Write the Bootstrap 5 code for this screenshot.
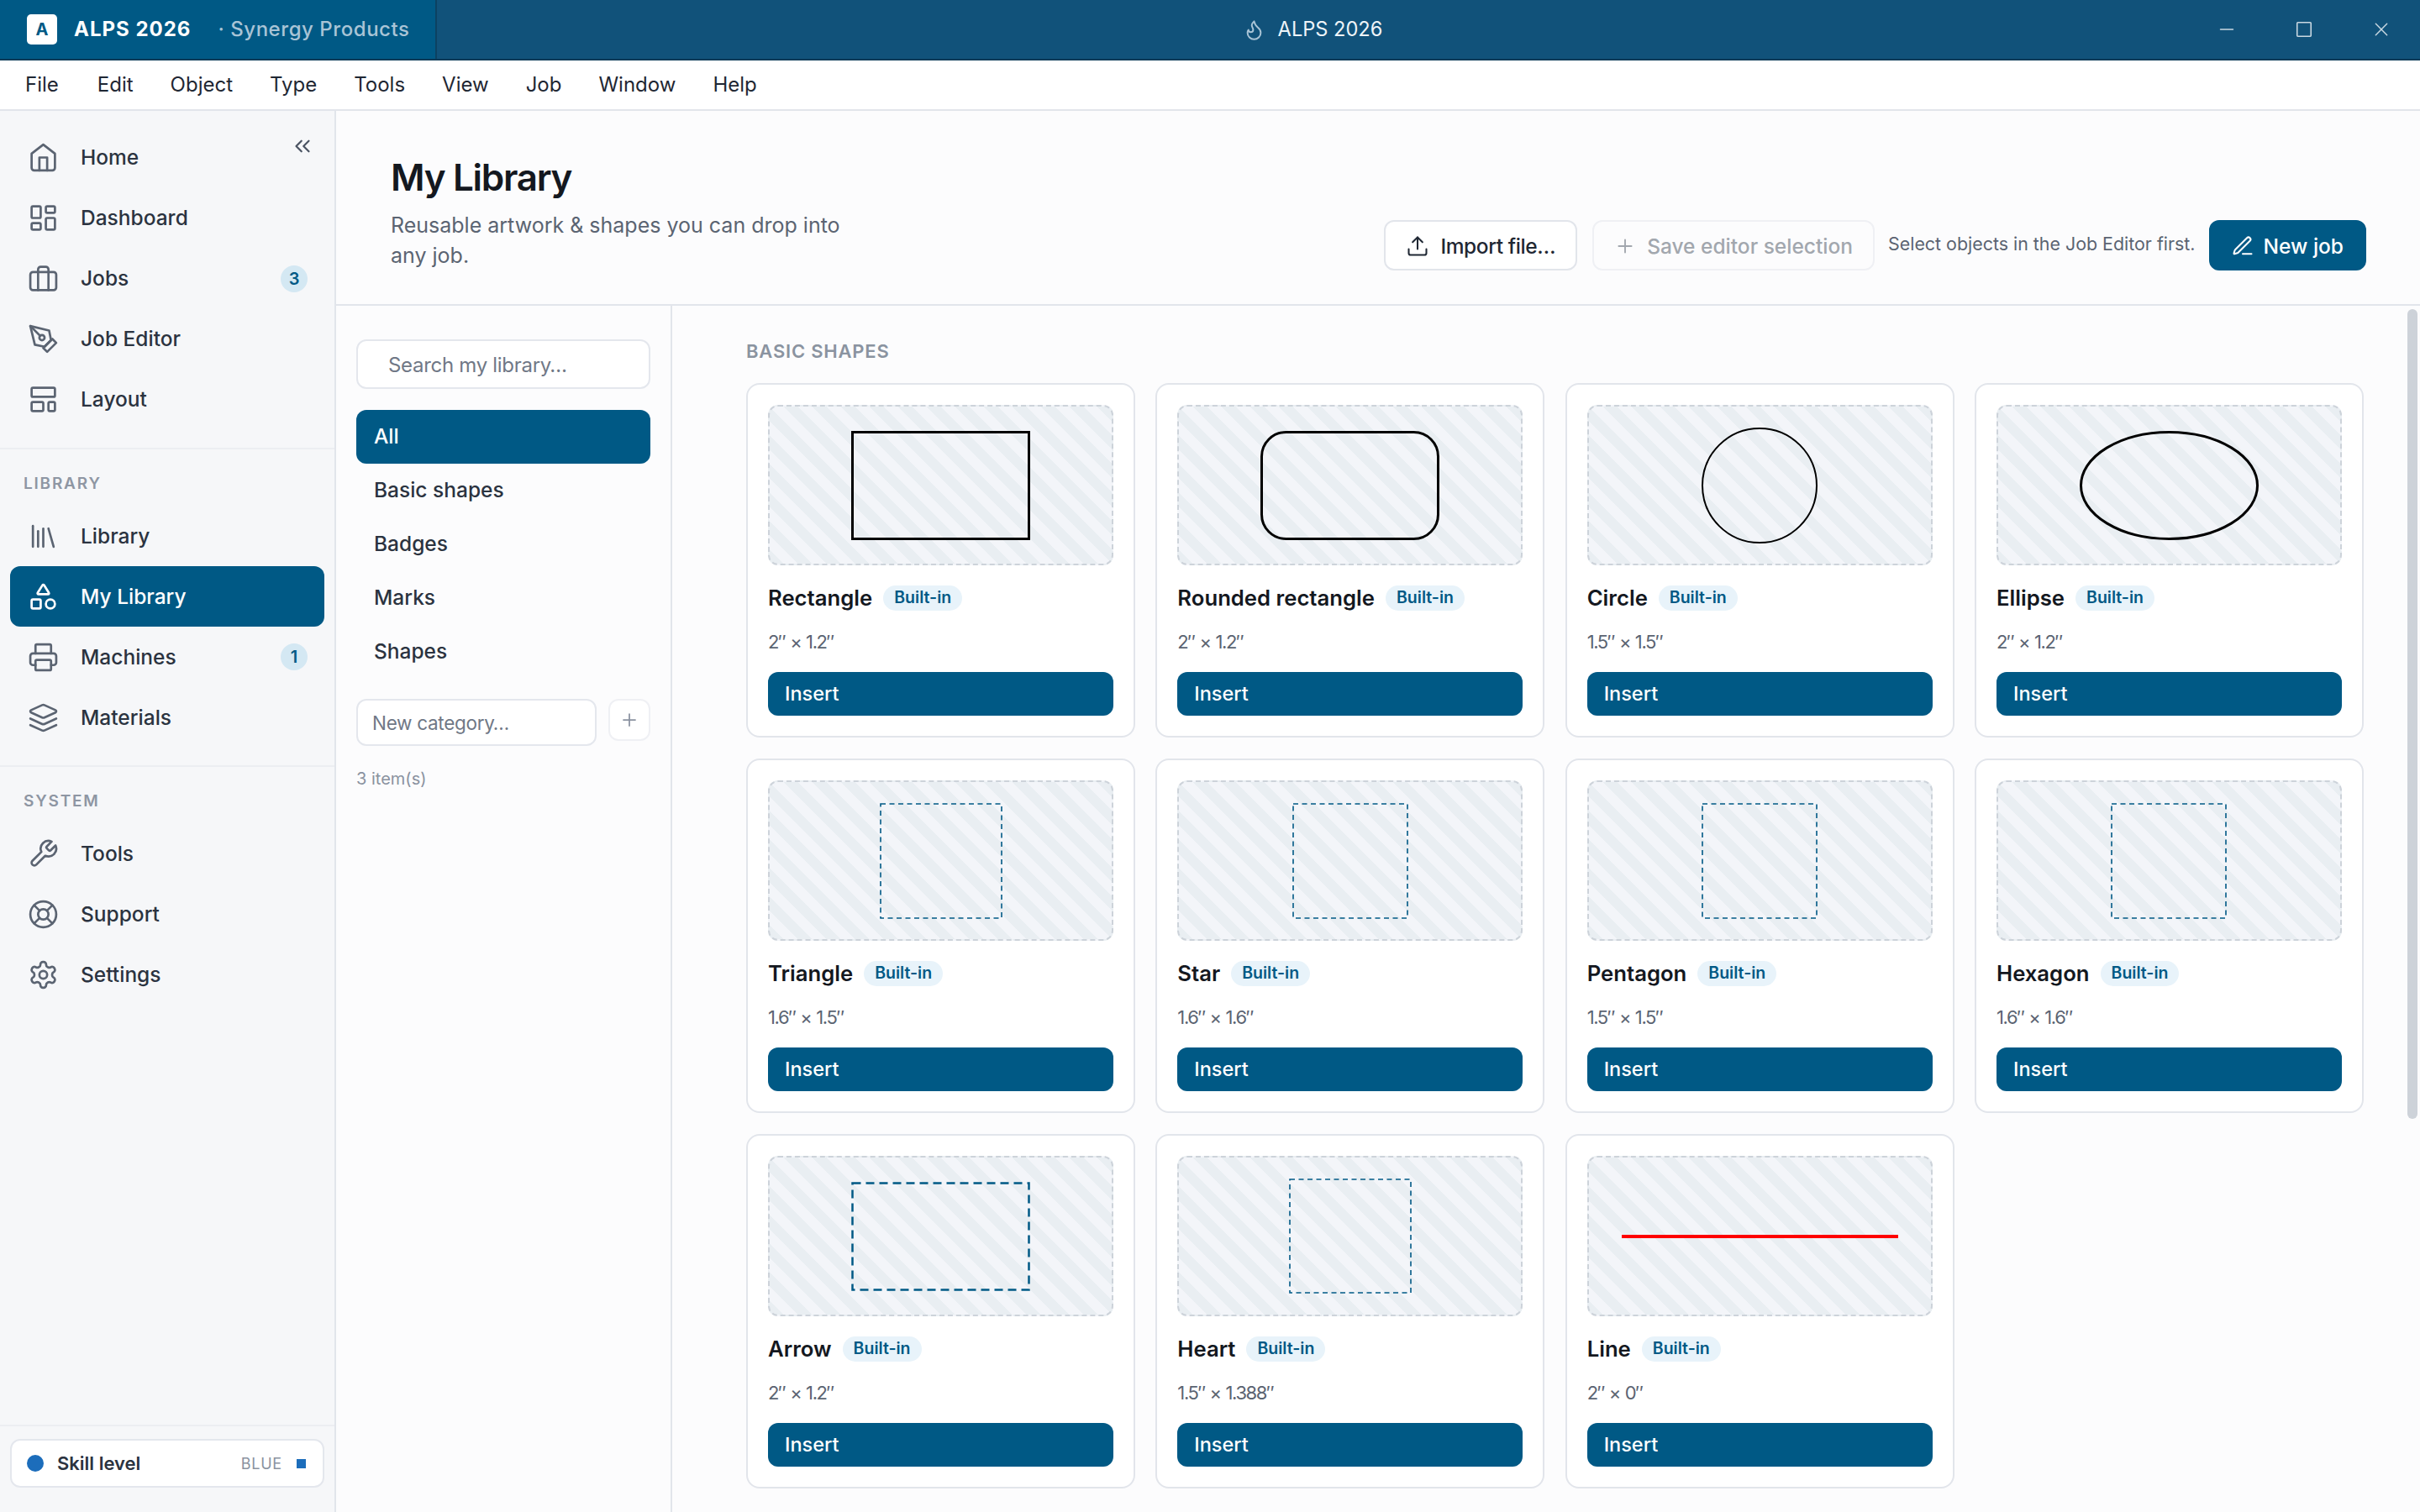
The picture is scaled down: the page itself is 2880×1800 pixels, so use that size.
<!DOCTYPE html>
<html lang="en">
<head>
  <meta charset="UTF-8">
  <title>ALPS 2026 - My Library</title>
  <link href="https://cdn.jsdelivr.net/npm/bootstrap@5.3.2/dist/css/bootstrap.min.css" rel="stylesheet">
  <style>
    html, body { height: 100%; }
    body { font-family: Inter, "Liberation Sans", sans-serif; font-size: 25px; color: #1f2733; background: #fcfcfd; overflow: hidden; }
    svg.ico { fill: none; stroke: currentColor; stroke-width: 1.75; stroke-linecap: round; stroke-linejoin: round; flex: none; }

    /* title bar */
    .title-strip { height: 72px; background: #11527a; border-bottom: 2px solid #0a3a57; color: #fff; flex: none; }
    .title-brand { width: 520px; height: 70px; background: #005985; border-right: 2px solid #0c4262; padding-left: 32px; }
    .logo-box { width: 36px; height: 36px; background: #fff; color: #005985; border-radius: 5px; font-size: 20px; font-weight: 700; }
    .brand-name { font-size: 24px; font-weight: 700; margin-left: 20px; letter-spacing: 1px; }
    .brand-sub { font-size: 24px; font-weight: 500; margin-left: 32px; color: #a9c4d6; letter-spacing: .55px; }
    .title-mid { font-size: 23.6px; color: #eef4f8; gap: 15px; }
    .title-mid svg { color: #a9c4d6; }
    .win-ctl { width: 92px; height: 70px; color: #c9d8e2; }

    /* menu bar */
    .menu-strip { height: 60px; background: #fff; border-bottom: 2px solid #e2e5eb; padding-left: 8px; flex: none; font-size: 24px; }
    .menu-strip span { padding: 0 22px; }
    .menu-strip span:first-child { padding-right: 24px; }

    /* sidebar */
    .side-col { width: 400px; background: #f6f7f9; border-right: 2px solid #e2e5eb; flex: none; }
    .side-group { padding: 19.5px 12px 21px; border-bottom: 2px solid #eceef2; }
    .side-group.no-rule { border-bottom: 0; }
    .side-head { font-size: 19px; font-weight: 600; letter-spacing: 1.8px; color: #8e96a3; line-height: 30px; padding: 26.5px 0 11px 16px; }
    .side-head.head-low { padding-top: 26px; }
    .side-link { height: 72px; padding: 0 20px 0 21px; gap: 26px; color: #2b3340; font-weight: 500; font-size: 24.5px; border-radius: 12px; text-decoration: none; }
    .side-link svg { color: #5b6472; }
    .side-link.active-link { background: #005985; color: #fff; }
    .side-link.active-link svg { color: #fff; }
    .count-dot { width: 32px; height: 32px; border-radius: 50%; background: #d4e8f3; color: #005985; font-size: 20px; font-weight: 600; margin-left: auto; }
    .collapse-btn { top: 27px; right: 23px; color: #4a5362; }
    .skill-wrap { border-top: 2px solid #eceef2; padding: 15px 12px 29px; }
    .skill-box { height: 58px; background: #fff; border: 2px solid #e4e7ed; border-radius: 12px; padding: 0 20px 0 18px; }
    .skill-dot { width: 20px; height: 20px; border-radius: 50%; background: #1c6dbb; }
    .skill-name { font-size: 22px; font-weight: 600; margin-left: 16px; color: #2b3340; }
    .skill-tag { font-size: 18px; letter-spacing: .8px; color: #8a92a0; margin-left: auto; }
    .skill-sq { width: 11px; height: 11px; background: #1c6dbb; margin-left: 17px; }

    /* page header */
    .page-head { height: 232px; border-bottom: 2px solid #e2e5eb; padding: 52px 64px 40px 65px; flex: none; }
    .page-title { font-size: 44px; font-weight: 600; line-height: 54px; margin: 0; color: #14181f; letter-spacing: -1.3px; }
    .page-sub { font-size: 25px; line-height: 36px; color: #5b6472; width: 560px; margin: 12px 0 0; }
    .btn.act-btn { height: 60px; font-size: 24.5px; font-weight: 500; border-radius: 12px; border: 2px solid #e2e5eb; background: #fff; color: #1f2733; padding: 2px 25px 0; gap: 13px; }
    .btn.act-btn.is-off { opacity: 1; color: #a2a7ae; background: #fcfcfd; border-color: #eff0f4; gap: 13px; padding: 2px 24px 0; }
    .btn.act-btn.is-main { background: #005985; border-color: #005985; color: #fff; gap: 11px; padding: 2px 25px 0 24px; }
    .btn.act-btn.is-tight { letter-spacing: -.4px; padding: 2px 24px 0; }
    .hint-txt { font-size: 21.4px; color: #5b6472; margin: 0 16px 4px; }

    /* category panel */
    .cat-col { width: 400px; border-right: 2px solid #e2e5eb; padding: 40px 24px 0 24px; flex: none; }
    .form-control.lib-input { border: 2px solid #e4e7ed; border-radius: 12px; font-size: 24px; letter-spacing: -.3px; color: #2b3340; box-shadow: none; background: #fff; }
    .form-control.lib-input::placeholder { color: #707886; }
    .form-control.lib-input.input-big { height: 59px; padding: 8px 0 6px 36px; }
    .form-control.lib-input.input-sm { font-size: 22.5px; height: 56px; padding-left: 17px; }
    .cat-item { height: 64px; padding: 0 21px 2px; font-size: 24.5px; font-weight: 500; color: #2b3340; border-radius: 12px; }
    .cat-item.cat-on { background: #005985; color: #fff; }
    .add-btn { width: 50px; height: 50px; border: 2px solid #eff0f4; border-radius: 12px; color: #8a92a0; flex: none; background: #fff; }
    .cat-count { font-size: 20px; color: #8a92a0; margin-top: 24px; }

    /* shape grid */
    .grid-col { padding: 40px 68px 0 88px; }
    .grid-head { font-size: 22px; font-weight: 600; letter-spacing: .8px; color: #8a93a0; line-height: 28px; margin-bottom: 24px; }
    .tile-grid { grid-template-columns: repeat(4, 463px); column-gap: 24.33px; row-gap: 25px; }
    .card.shape-tile { border: 2px solid #e2e5eb; border-radius: 16px; background: #fff; height: 422px; }
    .shape-tile .card-body { padding: 24px; }
    .shape-view { height: 191px; border: 2px dashed #cdd3da; border-radius: 12px; background: repeating-linear-gradient(45deg, #e9eef2 0 12px, #f3f5f9 12px 24px); }
    .name-row { height: 36px; margin-top: 21px; gap: 13px; }
    .shape-name { font-size: 25.7px; font-weight: 600; color: #14181f; }
    .tag-pill { height: 30px; padding: 0 13px; border-radius: 15px; background: #e8f3fa; color: #005985; font-size: 19.5px; font-weight: 600; }
    .shape-size { font-size: 22px; line-height: 32px; color: #5b6472; margin: 18px 0 20px; letter-spacing: -1.4px; word-spacing: 1px; }
    .btn.insert-btn { height: 52px; width: 100%; background: #005985; border: 0; border-radius: 12px; color: #fff; font-size: 23.5px; font-weight: 500; text-align: left; padding: 0 20px; }
    .scroll-thumb { top: 4px; right: 3px; width: 12px; height: 964px; background: #cdd2d9; border-radius: 6px; }
  </style>
</head>
<body class="d-flex flex-column">

  <svg width="0" height="0" class="position-absolute">
    <symbol id="i-home" viewBox="0 0 24 24"><path d="m3 9 9-7 9 7v11a2 2 0 0 1-2 2H5a2 2 0 0 1-2-2z"/><path d="M9 22V12h6v10"/></symbol>
    <symbol id="i-dash" viewBox="0 0 24 24"><rect x="3" y="3" width="7" height="9" rx="1"/><rect x="14" y="3" width="7" height="5" rx="1"/><rect x="14" y="12" width="7" height="9" rx="1"/><rect x="3" y="16" width="7" height="5" rx="1"/></symbol>
    <symbol id="i-jobs" viewBox="0 0 24 24"><rect x="2" y="7" width="20" height="14" rx="2"/><path d="M16 21V5a2 2 0 0 0-2-2h-4a2 2 0 0 0-2 2v16"/></symbol>
    <symbol id="i-pen" viewBox="0 0 24 24"><path d="m12 19 7-7 3 3-7 7-3-3z"/><path d="m18 13-1.5-7.5L2 2l3.5 14.5L13 18l5-5z"/><path d="m2 2 7.586 7.586"/><circle cx="11" cy="11" r="2"/></symbol>
    <symbol id="i-layout" viewBox="0 0 24 24"><rect x="3" y="3" width="18" height="7" rx="1"/><rect x="3" y="14" width="9" height="7" rx="1"/><rect x="16" y="14" width="5" height="7" rx="1"/></symbol>
    <symbol id="i-library" viewBox="0 0 24 24"><path d="m16 6 4 14"/><path d="M12 6v14"/><path d="M8 8v12"/><path d="M4 4v16"/></symbol>
    <symbol id="i-shapes" viewBox="0 0 24 24"><path d="M8.3 10a.7.7 0 0 1-.626-1.079L11.4 3a.7.7 0 0 1 1.198-.043L16.3 8.9a.7.7 0 0 1-.572 1.1Z"/><rect x="3" y="14" width="7" height="7" rx="1"/><circle cx="17.5" cy="17.5" r="3.5"/></symbol>
    <symbol id="i-print" viewBox="0 0 24 24"><path d="M6 18H4a2 2 0 0 1-2-2v-5a2 2 0 0 1 2-2h16a2 2 0 0 1 2 2v5a2 2 0 0 1-2 2h-2"/><path d="M6 9V3a1 1 0 0 1 1-1h10a1 1 0 0 1 1 1v6"/><rect x="6" y="14" width="12" height="8" rx="1"/></symbol>
    <symbol id="i-layers" viewBox="0 0 24 24"><path d="m12.83 2.18a2 2 0 0 0-1.66 0L2.6 6.08a1 1 0 0 0 0 1.83l8.58 3.91a2 2 0 0 0 1.66 0l8.58-3.9a1 1 0 0 0 0-1.83Z"/><path d="m22 17.65-9.17 4.16a2 2 0 0 1-1.66 0L2 17.65"/><path d="m22 12.65-9.17 4.16a2 2 0 0 1-1.66 0L2 12.65"/></symbol>
    <symbol id="i-wrench" viewBox="0 0 24 24"><path d="M14.7 6.3a1 1 0 0 0 0 1.4l1.6 1.6a1 1 0 0 0 1.4 0l3.77-3.77a6 6 0 0 1-7.94 7.94l-6.91 6.91a2.12 2.12 0 0 1-3-3l6.91-6.91a6 6 0 0 1 7.94-7.94l-3.76 3.76z"/></symbol>
    <symbol id="i-buoy" viewBox="0 0 24 24"><circle cx="12" cy="12" r="10"/><path d="m4.93 4.93 4.24 4.24"/><path d="m14.83 9.17 4.24-4.24"/><path d="m14.83 14.83 4.24 4.24"/><path d="m9.17 14.83-4.24 4.24"/><circle cx="12" cy="12" r="4"/></symbol>
    <symbol id="i-gear" viewBox="0 0 24 24"><path d="M12.22 2h-.44a2 2 0 0 0-2 2v.18a2 2 0 0 1-1 1.73l-.43.25a2 2 0 0 1-2 0l-.15-.08a2 2 0 0 0-2.73.73l-.22.38a2 2 0 0 0 .73 2.73l.15.1a2 2 0 0 1 1 1.72v.51a2 2 0 0 1-1 1.74l-.15.09a2 2 0 0 0-.73 2.73l.22.38a2 2 0 0 0 2.73.73l.15-.08a2 2 0 0 1 2 0l.43.25a2 2 0 0 1 1 1.73V20a2 2 0 0 0 2 2h.44a2 2 0 0 0 2-2v-.18a2 2 0 0 1 1-1.73l.43-.25a2 2 0 0 1 2 0l.15.08a2 2 0 0 0 2.73-.73l.22-.39a2 2 0 0 0-.73-2.73l-.15-.08a2 2 0 0 1-1-1.74v-.5a2 2 0 0 1 1-1.74l.15-.09a2 2 0 0 0 .73-2.73l-.22-.38a2 2 0 0 0-2.73-.73l-.15.08a2 2 0 0 1-2 0l-.43-.25a2 2 0 0 1-1-1.73V4a2 2 0 0 0-2-2z"/><circle cx="12" cy="12" r="3"/></symbol>
    <symbol id="i-flame" viewBox="0 0 24 24"><path d="M8.5 14.5A2.5 2.5 0 0 0 11 12c0-1.38-.5-2-1-3-1.072-2.143-.224-4.054 2-6 .5 2.5 2 4.9 4 6.5 2 1.6 3 3.5 3 5.5a7 7 0 1 1-14 0c0-1.153.433-2.294 1-3a2.5 2.5 0 0 0 2.5 2.5z"/></symbol>
    <symbol id="i-upload" viewBox="0 0 24 24"><path d="M21 15v4a2 2 0 0 1-2 2H5a2 2 0 0 1-2-2v-4"/><path d="m17 8-5-5-5 5"/><path d="M12 3v12"/></symbol>
    <symbol id="i-pencil" viewBox="0 0 24 24"><path d="M12 20h9"/><path d="M16.376 3.622a1 1 0 0 1 3.002 3.002L7.368 18.635a2 2 0 0 1-.855.506l-2.872.838a.5.5 0 0 1-.62-.62l.838-2.872a2 2 0 0 1 .506-.854z"/></symbol>
    <symbol id="i-plus" viewBox="0 0 24 24"><path d="M5 12h14"/><path d="M12 5v14"/></symbol>
    <symbol id="i-chev" viewBox="0 0 24 24"><path d="m11 17-5-5 5-5"/><path d="m18 17-5-5 5-5"/></symbol>
  </svg>

  <!-- Title bar -->
  <div class="title-strip d-flex align-items-start">
    <div class="title-brand d-flex align-items-center">
      <span class="logo-box d-flex align-items-center justify-content-center">A</span>
      <span class="brand-name">ALPS 2026</span>
      <span class="brand-sub">· Synergy Products</span>
    </div>
    <div class="title-mid flex-grow-1 d-flex align-items-center justify-content-center h-100">
      <svg class="ico" width="27" height="27"><use href="#i-flame"/></svg>
      <span>ALPS 2026</span>
    </div>
    <div class="win-ctl d-flex align-items-center justify-content-center"><svg class="ico" width="20" height="20" viewBox="0 0 24 24"><path d="M3 12h18"/></svg></div>
    <div class="win-ctl d-flex align-items-center justify-content-center"><svg class="ico" width="22" height="22" viewBox="0 0 24 24"><rect x="3" y="3" width="18" height="18" rx="1"/></svg></div>
    <div class="win-ctl d-flex align-items-center justify-content-center"><svg class="ico" width="20" height="20" viewBox="0 0 24 24"><path d="M4 4l16 16"/><path d="M20 4 4 20"/></svg></div>
  </div>

  <!-- Menu bar -->
  <div class="menu-strip d-flex align-items-center">
    <span>File</span><span>Edit</span><span>Object</span><span>Type</span><span>Tools</span><span>View</span><span>Job</span><span>Window</span><span>Help</span>
  </div>

  <div class="d-flex flex-grow-1" style="min-height:0">

    <!-- Sidebar -->
    <aside class="side-col d-flex flex-column position-relative">
      <svg class="ico collapse-btn position-absolute" width="30" height="30"><use href="#i-chev"/></svg>
      <nav class="side-group">
        <a class="side-link d-flex align-items-center" href="#"><svg class="ico" width="37" height="37"><use href="#i-home"/></svg>Home</a>
        <a class="side-link d-flex align-items-center" href="#"><svg class="ico" width="37" height="37"><use href="#i-dash"/></svg>Dashboard</a>
        <a class="side-link d-flex align-items-center" href="#"><svg class="ico" width="37" height="37"><use href="#i-jobs"/></svg>Jobs<span class="count-dot d-flex align-items-center justify-content-center">3</span></a>
        <a class="side-link d-flex align-items-center" href="#"><svg class="ico" width="37" height="37"><use href="#i-pen"/></svg>Job Editor</a>
        <a class="side-link d-flex align-items-center" href="#"><svg class="ico" width="37" height="37"><use href="#i-layout"/></svg>Layout</a>
      </nav>
      <nav class="side-group pt-0">
        <div class="side-head">LIBRARY</div>
        <a class="side-link d-flex align-items-center" href="#"><svg class="ico" width="37" height="37"><use href="#i-library"/></svg>Library</a>
        <a class="side-link active-link d-flex align-items-center" href="#"><svg class="ico" width="37" height="37"><use href="#i-shapes"/></svg>My Library</a>
        <a class="side-link d-flex align-items-center" href="#"><svg class="ico" width="37" height="37"><use href="#i-print"/></svg>Machines<span class="count-dot d-flex align-items-center justify-content-center">1</span></a>
        <a class="side-link d-flex align-items-center" href="#"><svg class="ico" width="37" height="37"><use href="#i-layers"/></svg>Materials</a>
      </nav>
      <nav class="side-group no-rule pt-0">
        <div class="side-head head-low">SYSTEM</div>
        <a class="side-link d-flex align-items-center" href="#"><svg class="ico" width="37" height="37"><use href="#i-wrench"/></svg>Tools</a>
        <a class="side-link d-flex align-items-center" href="#"><svg class="ico" width="37" height="37"><use href="#i-buoy"/></svg>Support</a>
        <a class="side-link d-flex align-items-center" href="#"><svg class="ico" width="37" height="37"><use href="#i-gear"/></svg>Settings</a>
      </nav>
      <div class="skill-wrap mt-auto">
        <div class="skill-box d-flex align-items-center">
          <span class="skill-dot"></span>
          <span class="skill-name">Skill level</span>
          <span class="skill-tag">BLUE</span>
          <span class="skill-sq"></span>
        </div>
      </div>
    </aside>

    <main class="flex-grow-1 d-flex flex-column" style="min-width:0">
      <!-- Page header -->
      <header class="page-head d-flex justify-content-between align-items-end">
        <div>
          <h1 class="page-title">My Library</h1>
          <p class="page-sub">Reusable artwork &amp; shapes you can drop into any job.</p>
        </div>
        <div class="d-flex align-items-center">
          <button class="btn act-btn is-tight d-flex align-items-center" style="margin-right:18px"><svg class="ico" width="28" height="28"><use href="#i-upload"/></svg>Import file…</button>
          <button class="btn act-btn is-off d-flex align-items-center" disabled><svg class="ico" width="26" height="26"><use href="#i-plus"/></svg>Save editor selection</button>
          <span class="hint-txt">Select objects in the Job Editor first.</span>
          <button class="btn act-btn is-main d-flex align-items-center"><svg class="ico" width="28" height="28"><use href="#i-pencil"/></svg>New job</button>
        </div>
      </header>

      <div class="d-flex flex-grow-1" style="min-height:0">
        <!-- Categories -->
        <div class="cat-col">
          <input class="form-control lib-input input-big" placeholder="Search my library…">
          <div class="d-flex flex-column" style="margin-top:25px">
            <div class="cat-item cat-on d-flex align-items-center">All</div>
            <div class="cat-item d-flex align-items-center">Basic shapes</div>
            <div class="cat-item d-flex align-items-center">Badges</div>
            <div class="cat-item d-flex align-items-center">Marks</div>
            <div class="cat-item d-flex align-items-center">Shapes</div>
          </div>
          <div class="d-flex align-items-start" style="margin-top:24px;gap:14px">
            <input class="form-control lib-input input-sm" placeholder="New category…">
            <div class="add-btn d-flex align-items-center justify-content-center"><svg class="ico" width="24" height="24"><use href="#i-plus"/></svg></div>
          </div>
          <div class="cat-count">3 item(s)</div>
        </div>

        <!-- Shapes -->
        <div class="grid-col flex-grow-1 position-relative overflow-hidden">
          <div class="grid-head">BASIC SHAPES</div>
          <div class="tile-grid d-grid">

            <div class="card shape-tile"><div class="card-body">
              <div class="shape-view d-flex align-items-center justify-content-center"><svg width="213" height="130"><rect x="1.5" y="1.5" width="210" height="127" fill="none" stroke="#000" stroke-width="3"/></svg></div>
              <div class="name-row d-flex align-items-center"><span class="shape-name">Rectangle</span><span class="tag-pill d-flex align-items-center">Built-in</span></div>
              <div class="shape-size">2″ × 1.2″</div>
              <button class="btn insert-btn">Insert</button>
            </div></div>

            <div class="card shape-tile"><div class="card-body">
              <div class="shape-view d-flex align-items-center justify-content-center"><svg width="213" height="130"><rect x="1.5" y="1.5" width="210" height="127" rx="29" fill="none" stroke="#000" stroke-width="3"/></svg></div>
              <div class="name-row d-flex align-items-center"><span class="shape-name">Rounded rectangle</span><span class="tag-pill d-flex align-items-center">Built-in</span></div>
              <div class="shape-size">2″ × 1.2″</div>
              <button class="btn insert-btn">Insert</button>
            </div></div>

            <div class="card shape-tile"><div class="card-body">
              <div class="shape-view d-flex align-items-center justify-content-center"><svg width="138" height="138"><circle cx="69" cy="69" r="68" fill="none" stroke="#000" stroke-width="2"/></svg></div>
              <div class="name-row d-flex align-items-center"><span class="shape-name">Circle</span><span class="tag-pill d-flex align-items-center">Built-in</span></div>
              <div class="shape-size">1.5″ × 1.5″</div>
              <button class="btn insert-btn">Insert</button>
            </div></div>

            <div class="card shape-tile"><div class="card-body">
              <div class="shape-view d-flex align-items-center justify-content-center"><svg width="213" height="130"><ellipse cx="106.5" cy="65" rx="105" ry="63.5" fill="none" stroke="#000" stroke-width="3"/></svg></div>
              <div class="name-row d-flex align-items-center"><span class="shape-name">Ellipse</span><span class="tag-pill d-flex align-items-center">Built-in</span></div>
              <div class="shape-size">2″ × 1.2″</div>
              <button class="btn insert-btn">Insert</button>
            </div></div>

            <div class="card shape-tile"><div class="card-body">
              <div class="shape-view d-flex align-items-center justify-content-center"><svg width="146" height="138"><rect x="1" y="1" width="144" height="136" fill="none" stroke="#005985" stroke-width="1.6" stroke-dasharray="6 4.5"/></svg></div>
              <div class="name-row d-flex align-items-center"><span class="shape-name">Triangle</span><span class="tag-pill d-flex align-items-center">Built-in</span></div>
              <div class="shape-size">1.6″ × 1.5″</div>
              <button class="btn insert-btn">Insert</button>
            </div></div>

            <div class="card shape-tile"><div class="card-body">
              <div class="shape-view d-flex align-items-center justify-content-center"><svg width="138" height="138"><rect x="1" y="1" width="136" height="136" fill="none" stroke="#005985" stroke-width="1.6" stroke-dasharray="6 4.5"/></svg></div>
              <div class="name-row d-flex align-items-center"><span class="shape-name">Star</span><span class="tag-pill d-flex align-items-center">Built-in</span></div>
              <div class="shape-size">1.6″ × 1.6″</div>
              <button class="btn insert-btn">Insert</button>
            </div></div>

            <div class="card shape-tile"><div class="card-body">
              <div class="shape-view d-flex align-items-center justify-content-center"><svg width="138" height="138"><rect x="1" y="1" width="136" height="136" fill="none" stroke="#005985" stroke-width="1.6" stroke-dasharray="6 4.5"/></svg></div>
              <div class="name-row d-flex align-items-center"><span class="shape-name">Pentagon</span><span class="tag-pill d-flex align-items-center">Built-in</span></div>
              <div class="shape-size">1.5″ × 1.5″</div>
              <button class="btn insert-btn">Insert</button>
            </div></div>

            <div class="card shape-tile"><div class="card-body">
              <div class="shape-view d-flex align-items-center justify-content-center"><svg width="138" height="138"><rect x="1" y="1" width="136" height="136" fill="none" stroke="#005985" stroke-width="1.6" stroke-dasharray="6 4.5"/></svg></div>
              <div class="name-row d-flex align-items-center"><span class="shape-name">Hexagon</span><span class="tag-pill d-flex align-items-center">Built-in</span></div>
              <div class="shape-size">1.6″ × 1.6″</div>
              <button class="btn insert-btn">Insert</button>
            </div></div>

            <div class="card shape-tile"><div class="card-body">
              <div class="shape-view d-flex align-items-center justify-content-center"><svg width="213" height="130"><rect x="1.5" y="1.5" width="210" height="127" fill="none" stroke="#005985" stroke-width="2.5" stroke-dasharray="10 6"/></svg></div>
              <div class="name-row d-flex align-items-center"><span class="shape-name">Arrow</span><span class="tag-pill d-flex align-items-center">Built-in</span></div>
              <div class="shape-size">2″ × 1.2″</div>
              <button class="btn insert-btn">Insert</button>
            </div></div>

            <div class="card shape-tile"><div class="card-body">
              <div class="shape-view d-flex align-items-center justify-content-center"><svg width="146" height="137"><rect x="1" y="1" width="144" height="135" fill="none" stroke="#005985" stroke-width="1.6" stroke-dasharray="6 4.5"/></svg></div>
              <div class="name-row d-flex align-items-center"><span class="shape-name">Heart</span><span class="tag-pill d-flex align-items-center">Built-in</span></div>
              <div class="shape-size">1.5″ × 1.388″</div>
              <button class="btn insert-btn">Insert</button>
            </div></div>

            <div class="card shape-tile"><div class="card-body">
              <div class="shape-view d-flex align-items-center justify-content-center"><svg width="329" height="4"><rect width="329" height="4" fill="#f00"/></svg></div>
              <div class="name-row d-flex align-items-center"><span class="shape-name">Line</span><span class="tag-pill d-flex align-items-center">Built-in</span></div>
              <div class="shape-size">2″ × 0″</div>
              <button class="btn insert-btn">Insert</button>
            </div></div>

          </div>
          <div class="scroll-thumb position-absolute"></div>
        </div>
      </div>
    </main>
  </div>

  <script src="https://cdn.jsdelivr.net/npm/bootstrap@5.3.2/dist/js/bootstrap.bundle.min.js"></script>
</body>
</html>
